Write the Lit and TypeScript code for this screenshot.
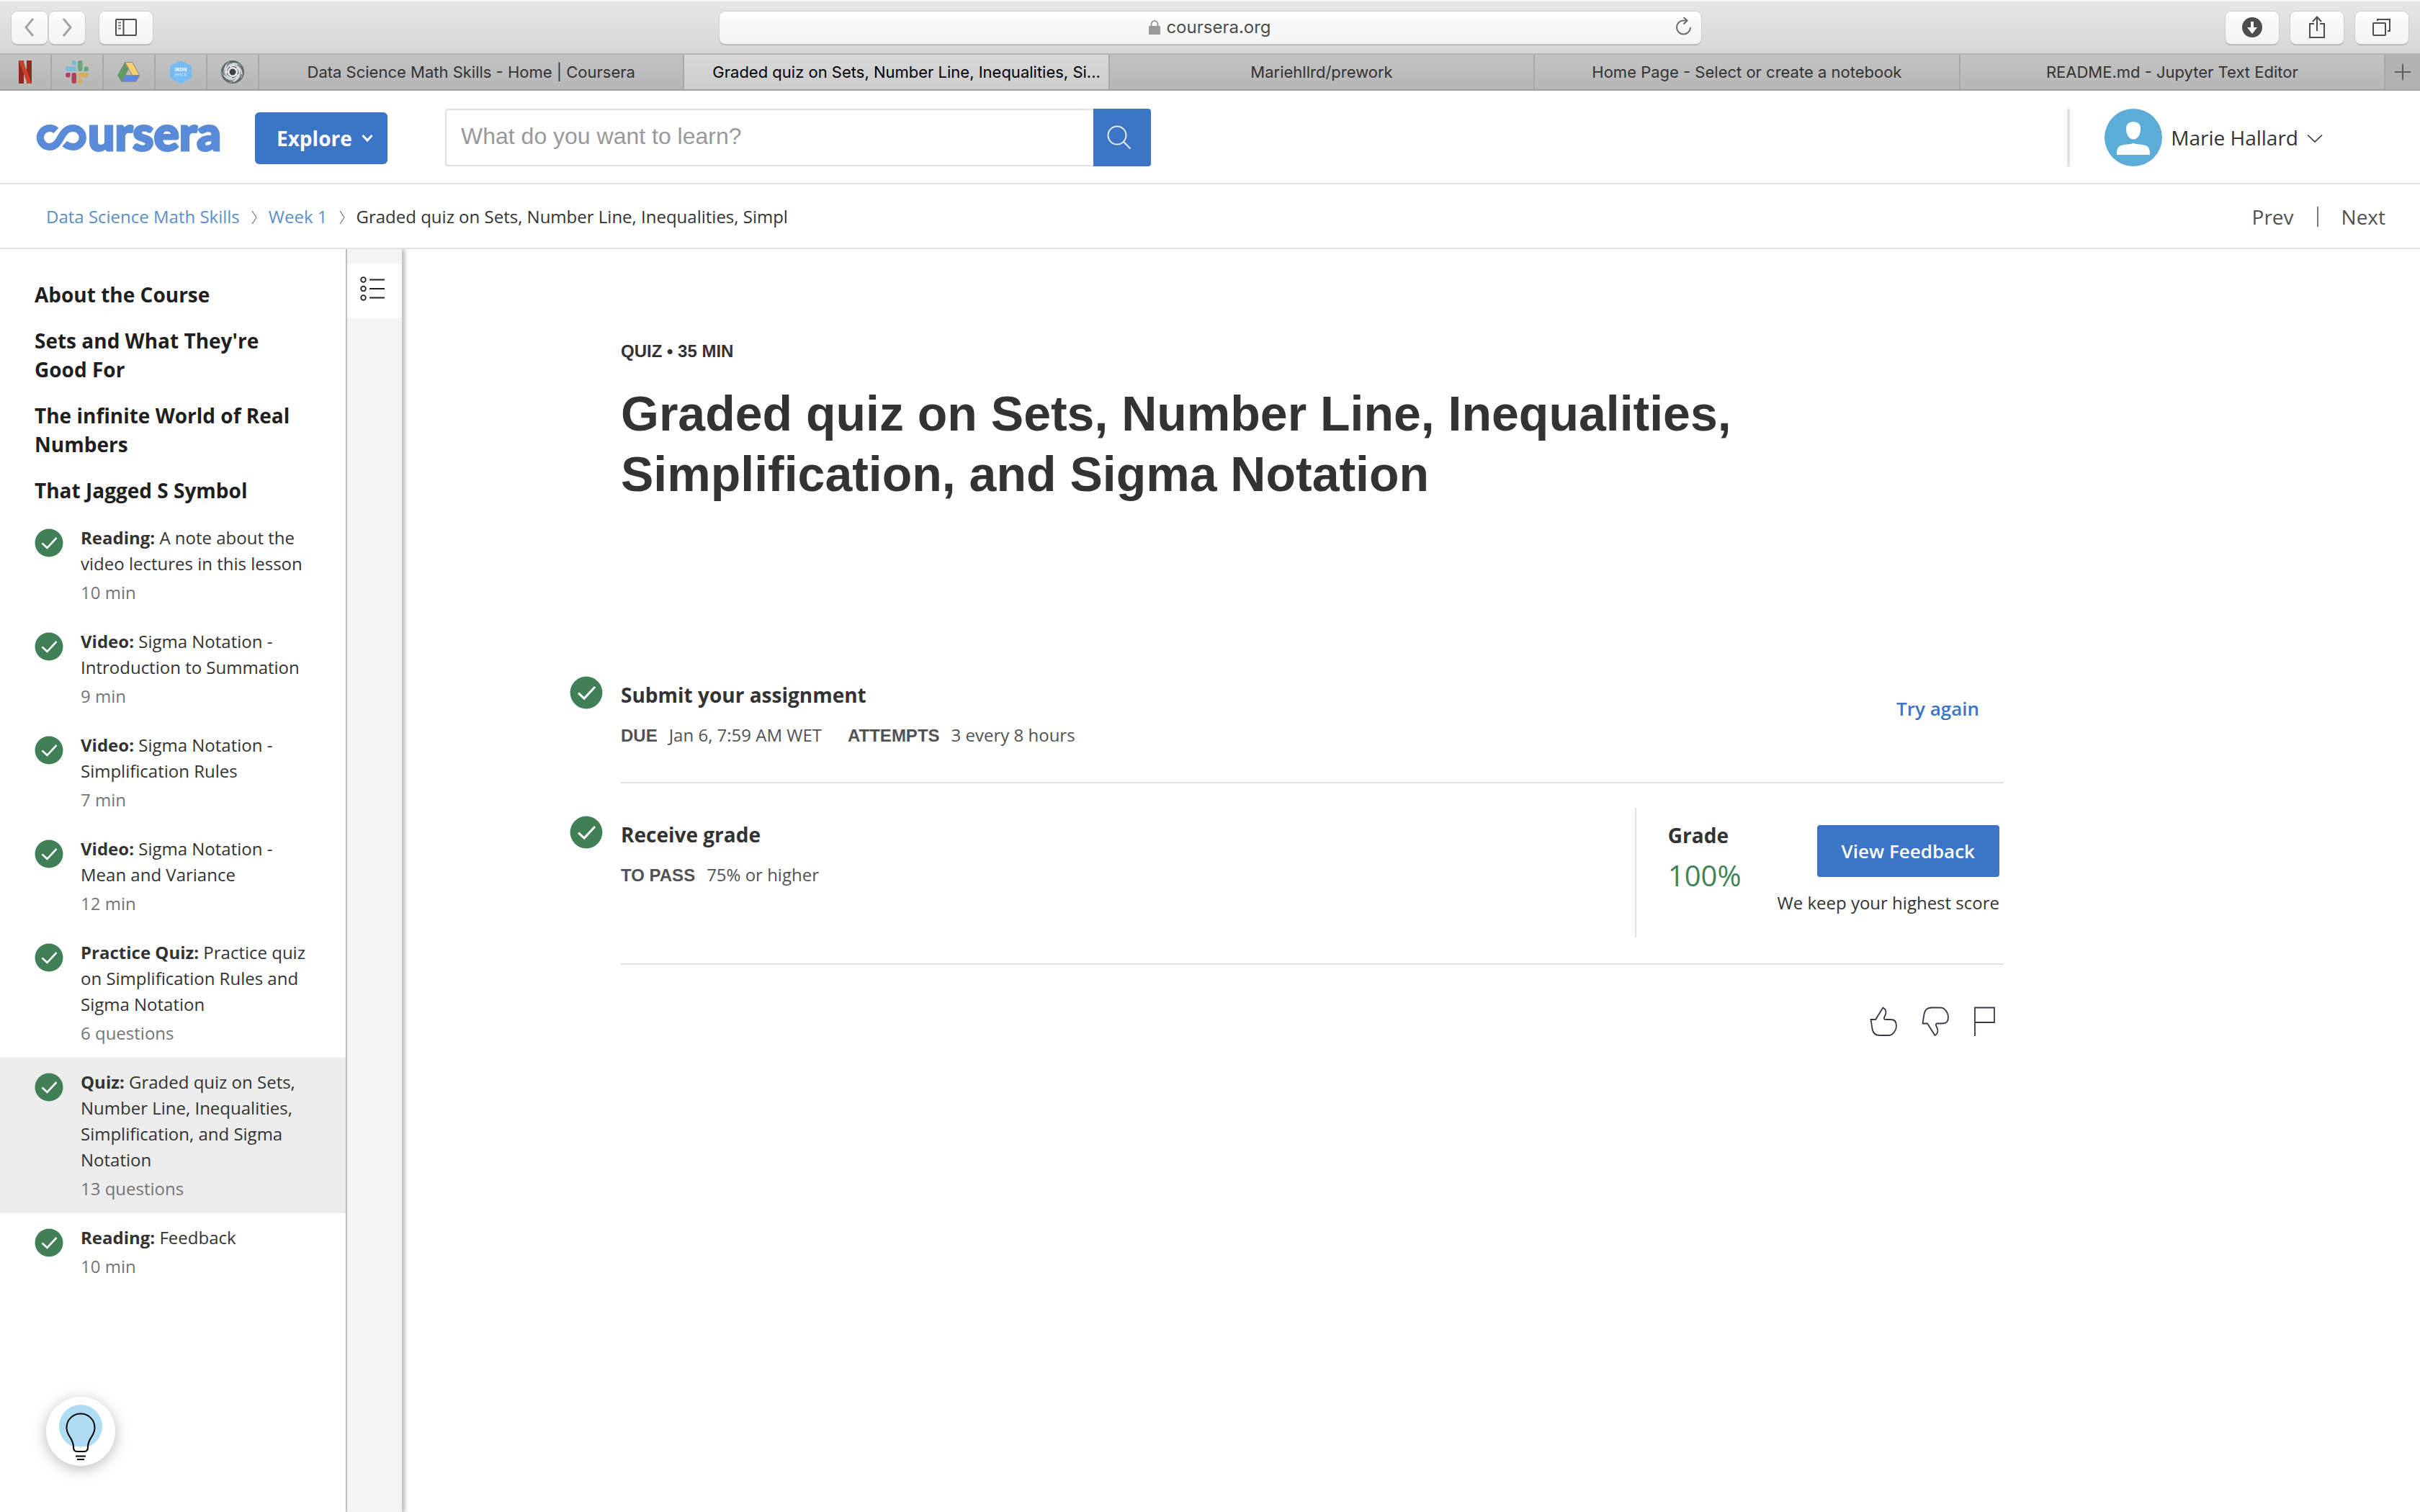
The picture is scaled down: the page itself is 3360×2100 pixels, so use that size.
import { LitElement, html, css, svg } from "lit";
import { customElement, property } from "lit/decorators.js";
import { classMap } from "lit/directives/class-map.js";

interface CourseItem {
  kind: string;
  title: string;
  meta: string;
  active?: boolean;
}

const LESSONS: string[] = [
  "About the Course",
  "Sets and What They're Good For",
  "The infinite World of Real Numbers",
  "That Jagged S Symbol",
];

const ITEMS: CourseItem[] = [
  { kind: "Reading:", title: "A note about the video lectures in this lesson", meta: "10 min" },
  { kind: "Video:", title: "Sigma Notation - Introduction to Summation", meta: "9 min" },
  { kind: "Video:", title: "Sigma Notation - Simplification Rules", meta: "7 min" },
  { kind: "Video:", title: "Sigma Notation - Mean and Variance", meta: "12 min" },
  { kind: "Practice Quiz:", title: "Practice quiz on Simplification Rules and Sigma Notation", meta: "6 questions" },
  { kind: "Quiz:", title: "Graded quiz on Sets, Number Line, Inequalities, Simplification, and Sigma Notation", meta: "13 questions", active: true },
  { kind: "Reading:", title: "Feedback", meta: "10 min" },
];

const TABS = [
  { title: "Data Science Math Skills - Home | Coursera" },
  { title: "Graded quiz on Sets, Number Line, Inequalities, Si...", active: true },
  { title: "Mariehllrd/prework" },
  { title: "Home Page - Select or create a notebook" },
  { title: "README.md - Jupyter Text Editor" },
];

const reset = css`
  * {
    box-sizing: border-box;
  }
  button {
    font: inherit;
    color: inherit;
    border: 0;
    padding: 0;
    margin: 0;
    background: none;
    cursor: pointer;
  }
  input {
    font: inherit;
    color: inherit;
    border: 0;
    padding: 0;
    margin: 0;
    background: none;
    outline: none;
    border-radius: 0;
  }
  a {
    color: inherit;
    text-decoration: none;
  }
  svg {
    display: block;
    flex: none;
  }
`;

const netflix = html`<svg width="18" height="32" viewBox="0 0 18 32">
  <rect x="0" y="0" width="7" height="32" fill="#96271e" />
  <rect x="11" y="0" width="7" height="32" fill="#96271e" />
  <path d="M0 0h6l12 32h-6z" fill="#c8402f" />
</svg>`;

const slack = html`<svg width="32" height="32" viewBox="0 0 32 32">
  <g fill="#7bb9d8">
    <rect x="0" y="8.5" width="15" height="6.5" rx="3.2" />
    <path d="M15 6.5h-3.2A3.3 3.3 0 1 1 15 3.2z" />
  </g>
  <g fill="#69a57e">
    <rect x="17" y="0" width="6.5" height="15" rx="3.2" />
    <path d="M25.5 15v-3.2A3.3 3.3 0 1 1 28.8 15z" />
  </g>
  <g fill="#d3ad5b">
    <rect x="17" y="17" width="15" height="6.5" rx="3.2" />
    <path d="M17 25.5h3.2A3.3 3.3 0 1 1 17 28.8z" />
  </g>
  <g fill="#b13f5b">
    <rect x="8.5" y="17" width="6.5" height="15" rx="3.2" />
    <path d="M6.5 17v3.2A3.3 3.3 0 1 1 3.2 17z" />
  </g>
</svg>`;

const drive = html`<svg width="32" height="28" viewBox="0 0 32 28">
  <path d="M10.500 .5 15.700 9.500 5.800 27.300 .5 18.700z" fill="#5f9b68" stroke="#8b8b72" stroke-width="1" />
  <path d="M10.500 .5H20.700L31 18.700H20.800z" fill="#f3cf70" stroke="#8b8b72" stroke-width="1" />
  <path d="M10.800 18.700H31L25.800 27.300H5.800z" fill="#5b87e4" stroke="#8b8b72" stroke-width="1" />
</svg>`;

const ironhack = html`<svg width="32" height="32" viewBox="0 0 32 32">
  <path d="M16 1 30 8.500V23.500L16 31 2 23.500V8.500z" fill="#74bcf3" stroke="#74bcf3" stroke-width="2" stroke-linejoin="round" />
  <text x="16" y="15" text-anchor="middle" font-family="Open Sans, sans-serif" font-weight="700" font-size="6.500" fill="#fff">IRON</text>
  <text x="16" y="22" text-anchor="middle" font-family="Open Sans, sans-serif" font-weight="300" font-size="6.500" fill="#fff">HACK</text>
</svg>`;

const swirl = html`<svg width="32" height="32" viewBox="0 0 32 32">
  <circle cx="16" cy="16" r="16" fill="#5b666b" />
  ${[0, 72, 144, 216, 288].map(
    (a) => svg`<path transform=${`rotate(${a} 16 16)`} d="M12 9C18 4.500 27 8.500 28.500 19" fill="none" stroke="#e4e6e6" stroke-width="2" />`
  )}
  ${[36, 108, 180, 252, 324].map(
    (a) => svg`<path transform=${`rotate(${a} 16 16)`} d="M14 5C21 2.500 29 8 30.500 16" fill="none" stroke="#b9bdbe" stroke-width="1" />`
  )}
  <circle cx="16" cy="16" r="5.800" fill="#3d4447" stroke="#ececec" stroke-width="2.600" />
</svg>`;

@customElement("browser-chrome")
class BrowserChrome extends LitElement {
  static styles = [
    reset,
    css`
      :host {
        display: block;
        font-family: Inter, "Liberation Sans", sans-serif;
      }
      .toolbar {
        display: grid;
        grid-template-columns: 1fr minmax(0, 1363px) 1fr;
        align-items: center;
        height: 76px;
        padding: 0 16px;
        background: linear-gradient(#e6e6e6, #d6d6d6);
        border-top: 2px solid #f3f3f3;
        border-bottom: 2px solid #b4b4b4;
      }
      .group {
        display: flex;
        gap: 2px;
      }
      .end {
        justify-content: flex-end;
        gap: 16px;
      }
      .tool {
        display: flex;
        align-items: center;
        justify-content: center;
        width: 50px;
        height: 45px;
        border-radius: 8px;
        background: linear-gradient(#fdfdfd, #f3f3f3);
        box-shadow: 0 0 0 1px #cccccc, 0 2px 0 0 #adadad;
      }
      .wide {
        width: 74px;
      }
      .sidebar {
        margin-left: 18px;
      }
      .address {
        display: grid;
        grid-template-columns: 1fr auto 1fr;
        align-items: center;
        height: 45px;
        padding: 0 12px;
        border-radius: 8px;
        background: linear-gradient(#fdfdfd, #f3f3f3);
        box-shadow: 0 0 0 1px #cccccc, 0 2px 0 0 #adadad;
      }
      .site {
        grid-column: 2;
        display: flex;
        align-items: center;
        gap: 8px;
        font-size: 24px;
        line-height: 32px;
        color: #4c4c4c;
      }
      .site input {
        field-sizing: content;
      }
      .reload {
        justify-self: end;
      }
      .tabs {
        display: grid;
        grid-template-columns: repeat(5, 72px) repeat(5, minmax(0, 1fr)) 48px;
        height: 50px;
        background: linear-gradient(#c2c2c2, #b6b6b6);
        border-bottom: 2px solid #a3a3a3;
      }
      .pin {
        display: flex;
        align-items: center;
        justify-content: center;
        border-right: 2px solid #a8a8a8;
      }
      .tab {
        padding: 0 30px;
        border-right: 2px solid #a8a8a8;
        font-size: 22px;
        line-height: 48px;
        color: #333;
        text-align: center;
        white-space: nowrap;
        overflow: hidden;
      }
      .active {
        padding: 0 2px 0 30px;
        background: linear-gradient(#d8d8d8, #cccccc);
        color: #000;
      }
      .add {
        display: flex;
        align-items: center;
        justify-content: center;
        background: #b2b2b2;
      }
    `,
  ];

  render() {
    return html`
      <div class="toolbar">
        <div class="group">
          <button class="tool" aria-label="Back">
            <svg width="14" height="26" viewBox="0 0 14 26" fill="none" stroke="#a2a2a2" stroke-width="3"><path d="M12 1 2 13l10 12" /></svg>
          </button>
          <button class="tool" aria-label="Forward">
            <svg width="14" height="26" viewBox="0 0 14 26" fill="none" stroke="#a2a2a2" stroke-width="3"><path d="M2 1l10 12L2 25" /></svg>
          </button>
          <button class="tool wide sidebar" aria-label="Sidebar">
            <svg width="30" height="24" viewBox="0 0 30 24" fill="none" stroke="#4d4d4d" stroke-width="2">
              <rect x="1" y="1" width="28" height="22" rx="1" />
              <path d="M11.500 1v22" />
              <path d="M4 5.500h4M4 9.500h4M4 13.500h4" stroke="#777" />
            </svg>
          </button>
        </div>
        <div class="address">
          <label class="site">
            <svg width="16" height="20" viewBox="0 0 16 20"><path d="M3.500 9V6a4.500 5 0 0 1 9 0v3" fill="none" stroke="#999" stroke-width="2" /><rect y="8" width="16" height="12" rx="1" fill="#999" /></svg>
            <input type="text" value="coursera.org" size="11" aria-label="Address" />
          </label>
          <button class="reload" aria-label="Reload">
            <svg width="24" height="28" viewBox="0 0 24 28" fill="none" stroke="#6a6a6a" stroke-width="2"><path d="M21 14a9.500 9.500 0 1 1-9.500-9.500H16" /><path d="M11.500 0 16.500 4.500 11.500 9.500" /></svg>
          </button>
        </div>
        <div class="group end">
          <button class="tool wide" aria-label="Downloads">
            <svg width="28" height="28" viewBox="0 0 28 28"><circle cx="14" cy="14" r="14" fill="#4d4d4d" /><path d="M12 6h4v8h5l-7 9-7-9h5z" fill="#fff" /></svg>
          </button>
          <button class="tool wide" aria-label="Share">
            <svg width="24" height="32" viewBox="0 0 24 32" fill="none" stroke="#4d4d4d" stroke-width="2"><path d="M8 11H2v19h20V11h-6M12 21V2M6 8l6-6.500L18 8" /></svg>
          </button>
          <button class="tool wide" aria-label="Tabs">
            <svg width="26" height="26" viewBox="0 0 26 26" fill="none" stroke="#4d4d4d" stroke-width="2"><rect x="1" y="7" width="17" height="17" rx="1" /><path d="M7 4V2h17v16h-3" /></svg>
          </button>
        </div>
      </div>
      <div class="tabs">
        ${[
          ["Netflix", netflix],
          ["Slack", slack],
          ["Drive", drive],
          ["Ironhack", ironhack],
          ["Swirl", swirl],
        ].map(([name, icon]) => html`<button class="pin" aria-label=${name}>${icon}</button>`)}
        ${TABS.map((t) => html`<button class=${classMap({ tab: true, active: !!t.active })}>${t.title}</button>`)}
        <button class="add" aria-label="New tab">
          <svg width="22" height="22" viewBox="0 0 22 22" stroke="#5c5c5c" stroke-width="2"><path d="M11 0v22M0 11h22" /></svg>
        </button>
      </div>
    `;
  }
}

@customElement("site-header")
class SiteHeader extends LitElement {
  static styles = [
    reset,
    css`
      :host {
        display: block;
        font-family: "Open Sans", sans-serif;
        color: #333;
      }
      .bar {
        display: flex;
        align-items: center;
        height: 130px;
        padding: 2px 135px 0 50px;
        border-bottom: 2px solid #e1e1e1;
      }
      .logo {
        display: flex;
        align-items: center;
        width: 254px;
        color: #5a8bd8;
      }
      .word {
        margin-top: -14px;
        font: 900 66px/66px Lato, sans-serif;
        -webkit-text-stroke: 3px currentColor;
      }
      .explore {
        display: flex;
        align-items: center;
        justify-content: space-between;
        width: 184px;
        height: 72px;
        margin: 2px 80px 0 50px;
        padding: 0 20px 0 30px;
        border-radius: 6px;
        background: #3c74c6;
        color: #fff;
        font-size: 28px;
        font-weight: 700;
      }
      .search {
        display: flex;
        width: 980px;
        height: 80px;
      }
      .search input {
        flex: 1;
        min-width: 0;
        padding: 0 20px 4px;
        border: 2px solid #e1e1e1;
        border-right: 0;
        border-radius: 4px 0 0 4px;
        font: 32px/40px "Liberation Sans", sans-serif;
      }
      .search input::placeholder {
        color: #999;
        opacity: 1;
      }
      .go {
        display: flex;
        align-items: center;
        justify-content: center;
        width: 80px;
        padding-right: 8px;
        border-radius: 0 4px 4px 0;
        background: #3c74c6;
      }
      .user {
        display: flex;
        align-items: center;
        height: 80px;
        margin-left: auto;
        padding-left: 48px;
        border-left: 4px solid #e1e1e1;
        font-size: 28px;
      }
      .name {
        margin: 0 12px;
      }
      .crumbs {
        display: flex;
        align-items: center;
        height: 90px;
        padding: 2px 48px 0 64px;
        border-bottom: 2px solid #e1e1e1;
        font-size: 24px;
        line-height: 36px;
      }
      .crumbs a {
        color: #5a8fcb;
      }
      .sep {
        margin: 2px 16px 0;
      }
      .pager {
        display: flex;
        align-items: center;
        gap: 32px;
        margin-left: auto;
        font-size: 28px;
        color: #525252;
      }
      .rule {
        width: 2px;
        height: 28px;
        background: #7a7a7a;
      }
    `,
  ];

  render() {
    const sep = html`<svg class="sep" width="8" height="18" viewBox="0 0 8 18" fill="none" stroke="#757575" stroke-width="1.200"><path d="M1 0l6 9-6 9" /></svg>`;
    return html`
      <header class="bar">
        <a class="logo" href="#">
          <svg width="72" height="36" viewBox="1 0 70 36" preserveAspectRatio="none" fill="none" stroke="currentColor" stroke-width="10">
            <path d="M28.200 8.200A13 13 0 1 0 19 31C26.500 31 30 26 34.500 18 39 9 43.500 5 51 5A13 13 0 1 1 51 31C46.500 31 43 29.500 39.500 26.500" />
          </svg>
          <span class="word">ursera</span>
        </a>
        <button class="explore">
          Explore
          <svg width="16" height="12" viewBox="0 0 16 12" fill="none" stroke="#fff" stroke-width="3"><path d="M1.500 2 8 9l6.500-7" /></svg>
        </button>
        <form class="search">
          <input type="text" placeholder="What do you want to learn?" aria-label="What do you want to learn?" />
          <button class="go" type="button" aria-label="Search">
            <svg width="34" height="34" viewBox="0 0 34 34" fill="none" stroke="#e8eef8" stroke-width="2"><circle cx="14" cy="14" r="12.500" /><path d="M23 23l9.500 9.500" /></svg>
          </button>
        </form>
        <button class="user">
          <svg width="80" height="80" viewBox="0 0 80 80">
            <circle cx="40" cy="40" r="40" fill="#5cacd8" />
            <path d="M40 18c6 0 10 3.500 10 9.500 0 8-3.500 15-10 15s-10-7-10-15C30 21.500 34 18 40 18z" fill="#fff" />
            <path d="M17 64c0-8 1-11 6-13 5-1.500 12-1.500 17-3 5 1.500 12 1.500 17 3 5 2 6 5 6 13z" fill="#fff" />
          </svg>
          <span class="name">Marie Hallard</span>
          <svg width="22" height="14" viewBox="0 0 22 14" fill="none" stroke="#333" stroke-width="1.600"><path d="M1 3.500 11 13l10-9.500" /></svg>
        </button>
      </header>
      <nav class="crumbs">
        <a href="#">Data Science Math Skills</a>${sep}<a href="#">Week 1</a>${sep}<span>Graded quiz on Sets, Number Line, Inequalities, Simpl</span>
        <div class="pager">
          <button>Prev</button>
          <span class="rule"></span>
          <button>Next</button>
        </div>
      </nav>
    `;
  }
}

@customElement("done-mark")
class DoneMark extends LitElement {
  @property({ type: Number }) size = 40;

  static styles = css`
    :host {
      display: block;
      flex: none;
    }
    svg {
      display: block;
    }
  `;

  render() {
    return html`<svg width=${this.size} height=${this.size} viewBox="0 0 40 40">
      <circle cx="20" cy="20" r="19.500" fill="#418057" />
      <path d="M10.500 20.500 17.500 27 30.500 13" fill="none" stroke="#fff" stroke-width="2.600" />
    </svg>`;
  }
}

@customElement("course-sidebar")
class CourseSidebar extends LitElement {
  static styles = [
    reset,
    css`
      :host {
        display: flex;
        font-family: "Open Sans", sans-serif;
        color: #333;
      }
      .outline {
        display: flex;
        flex-direction: column;
        width: 482px;
        padding-top: 43px;
        border-right: 2px solid #c9c9c9;
      }
      .lessons {
        display: flex;
        flex-direction: column;
        gap: 24px;
        padding: 0 48px;
        margin-bottom: 12px;
      }
      .lesson {
        font-size: 28px;
        line-height: 40px;
        font-weight: 700;
        color: #1f1f1f;
      }
      .item {
        display: flex;
        gap: 24px;
        padding: 16px 48px;
        font-size: 24px;
        line-height: 36px;
      }
      .mark {
        padding-top: 5px;
      }
      .meta {
        margin-top: 4px;
        color: #757575;
      }
      .active {
        background: #ececec;
      }
      .help {
        display: flex;
        align-items: center;
        justify-content: center;
        width: 96px;
        height: 96px;
        margin: auto 0 64px 64px;
        border-radius: 50%;
        background: #fff;
        box-shadow: 0 4px 20px rgba(0, 0, 0, 0.28);
      }
      .rail {
        width: 76px;
        padding-top: 20px;
        background: #f3f3f3;
        box-shadow: 3px 0 6px 1px rgba(0, 0, 0, 0.28);
      }
      .toggle {
        display: flex;
        align-items: center;
        justify-content: center;
        width: 100%;
        height: 76px;
        padding: 0 6px 6px 0;
        border-radius: 4px;
        background: #fff;
      }
    `,
  ];

  render() {
    return html`
      <nav class="outline">
        <div class="lessons">${LESSONS.map((l) => html`<a class="lesson" href="#">${l}</a>`)}</div>
        ${ITEMS.map(
          (i) => html`<a href="#" class=${classMap({ item: true, active: !!i.active })}>
            <done-mark class="mark" .size=${40}></done-mark>
            <div>
              <div><strong>${i.kind}</strong> ${i.title}</div>
              <div class="meta">${i.meta}</div>
            </div>
          </a>`
        )}
        <button class="help" aria-label="Help">
          <svg width="60" height="80" viewBox="0 0 60 80" fill="none" stroke="#000" stroke-width="2">
            <circle cx="30" cy="33" r="30" fill="#aedcf2" stroke="none" />
            <path d="M39.500 61V66q0 3-3 3H24q-3 0-3-3V61z" fill="#fff" stroke="none" />
            <path d="M30 15.500c11 0 19.500 8.500 19.500 19.500 0 12-9.500 14-9.500 27 0 4-1.500 6-5 6H25c-3.500 0-5-2-5-6 0-13-9.500-15-9.500-27C10.500 24 19 15.500 30 15.500z" />
            <path d="M23 74.500h14M25 79h10" />
          </svg>
        </button>
      </nav>
      <div class="rail">
        <button class="toggle" aria-label="Course outline">
          <svg width="34" height="34" viewBox="0 0 34 34" fill="none" stroke="#222" stroke-width="1.800">
            <circle cx="4.500" cy="4.500" r="3.300" /><circle cx="4.500" cy="17" r="3.300" /><circle cx="4.500" cy="29.500" r="3.300" />
            <path d="M13 4.500h21M13 17h21M13 29.500h21" />
          </svg>
        </button>
      </div>
    `;
  }
}

@customElement("quiz-page")
class QuizPage extends LitElement {
  static styles = [
    reset,
    css`
      :host {
        display: block;
        padding: 124px 578px 0 233px;
        font-family: "Open Sans", sans-serif;
        color: #333;
      }
      .intro {
        padding-left: 71px;
      }
      .kicker {
        font: 700 24px/36px "Liberation Sans", sans-serif;
      }
      h1 {
        margin: 26px 0 194px;
        font: 700 68px/84px "Liberation Sans", sans-serif;
      }
      .row {
        display: grid;
        grid-template-columns: 71px minmax(0, 1fr);
      }
      .mark {
        padding-top: 45px;
      }
      .body {
        display: flex;
        justify-content: space-between;
        border-bottom: 2px solid #e1e1e1;
      }
      .status {
        padding: 51px 0 47px;
      }
      h2,
      h3 {
        margin: 0;
        font-size: 28px;
        line-height: 40px;
        font-weight: 700;
      }
      .facts {
        display: flex;
        gap: 36px;
        margin-top: 18px;
        font-size: 24px;
        line-height: 36px;
        color: #525252;
      }
      .facts b {
        margin-right: 16px;
        font-family: "Liberation Sans", sans-serif;
        line-height: 24px;
      }
      .retry {
        align-self: center;
        height: 72px;
        margin-right: 34px;
        margin-bottom: 12px;
        font-size: 26px;
        font-weight: 600;
        color: #3c74c6;
      }
      .panel {
        display: flex;
        gap: 50px;
        height: 180px;
        margin: 34px 0 36px;
        padding: 18px 6px 0 44px;
        border-left: 2px solid #e1e1e1;
      }
      .score {
        margin-top: 8px;
        font-size: 40px;
        line-height: 56px;
        color: #3f8557;
      }
      .feedback {
        display: flex;
        flex-direction: column;
        align-items: flex-end;
        gap: 18px;
        padding-top: 6px;
        font-size: 24px;
        line-height: 36px;
      }
      .view {
        height: 72px;
        padding: 0 34px;
        border-radius: 4px;
        background: #3c74c6;
        color: #fff;
        font-size: 26px;
        font-weight: 600;
      }
      .rate {
        display: flex;
        justify-content: flex-end;
        gap: 33px;
        padding: 58px 12px 0 0;
      }
    `,
  ];

  render() {
    const thumb = "M1.500 18H8L18.500 1.500C22.500 3.500 23.500 8 21.500 12 20 15 18.500 18 22 18H29C34 18 37 21 37 26.500 37 31 34 36 31 38.500 29.500 40 28 40 26 40H14C8 40 4.500 37 3.500 31z";
    return html`
      <div class="intro">
        <div class="kicker">QUIZ • 35 MIN</div>
        <h1>Graded quiz on Sets, Number Line, Inequalities, Simplification, and Sigma Notation</h1>
      </div>
      <section class="row">
        <done-mark class="mark" .size=${46}></done-mark>
        <div class="body">
          <div class="status">
            <h2>Submit your assignment</h2>
            <div class="facts">
              <span><b>DUE</b>Jan 6, 7:59 AM WET</span>
              <span><b>ATTEMPTS</b>3 every 8 hours</span>
            </div>
          </div>
          <button class="retry">Try again</button>
        </div>
      </section>
      <section class="row">
        <done-mark class="mark" .size=${46}></done-mark>
        <div class="body">
          <div class="status">
            <h2>Receive grade</h2>
            <div class="facts"><span><b>TO PASS</b>75% or higher</span></div>
          </div>
          <div class="panel">
            <div>
              <h3>Grade</h3>
              <div class="score">100%</div>
            </div>
            <div class="feedback">
              <button class="view">View Feedback</button>
              <span>We keep your highest score</span>
            </div>
          </div>
        </div>
      </section>
      <div class="rate">
        <button aria-label="Like">
          <svg width="39" height="42" viewBox="0 0 39 42" fill="none" stroke="#373a44" stroke-width="1.800"><path d=${thumb} /></svg>
        </button>
        <button aria-label="Dislike">
          <svg width="39" height="42" viewBox="0 0 39 42" fill="none" stroke="#373a44" stroke-width="1.800"><g transform="matrix(1 0 0 -1 0 41.500)"><path d=${thumb} /></g></svg>
        </button>
        <button aria-label="Report">
          <svg width="30" height="42" viewBox="0 0 30 42" fill="none" stroke="#373a44" stroke-width="1.800"><path d="M2 41V1.500H29V22H2" /></svg>
        </button>
      </div>
    `;
  }
}

@customElement("app-root")
class AppRoot extends LitElement {
  static styles = css`
    :host {
      display: flex;
      flex-direction: column;
      min-height: 100vh;
      background: #fff;
    }
    .content {
      display: flex;
      flex: 1;
      overflow: hidden;
    }
    .page {
      flex: 1;
      min-width: 0;
    }
  `;

  render() {
    return html`
      <browser-chrome></browser-chrome>
      <site-header></site-header>
      <div class="content">
        <course-sidebar></course-sidebar>
        <quiz-page class="page"></quiz-page>
      </div>
    `;
  }
}
